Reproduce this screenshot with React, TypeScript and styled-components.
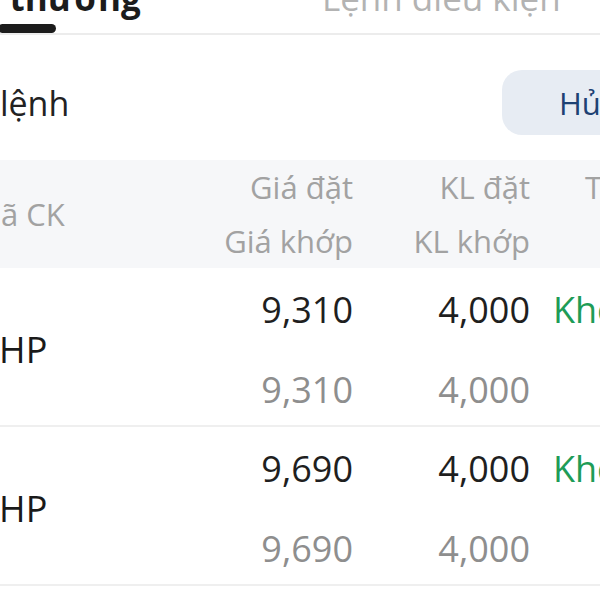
import React from 'react';
import styled, { createGlobalStyle, css } from 'styled-components';

const GlobalStyle = createGlobalStyle`
  body {
    margin: 0;
    background: #ffffff;
    font-family: "Open Sans", "Noto Sans", sans-serif;
  }
`;

type Order = {
  symbol: string;
  price: string;
  matchedPrice: string;
  volume: string;
  matchedVolume: string;
  status: string;
};

const orders: Order[] = [
  { symbol: 'DHP', price: '9,310', matchedPrice: '9,310', volume: '4,000', matchedVolume: '4,000', status: 'Khớp hết' },
  { symbol: 'DHP', price: '9,690', matchedPrice: '9,690', volume: '4,000', matchedVolume: '4,000', status: 'Khớp hết' }
];

// The screen is larger than the window, so it's cropped like the reference
const Viewport = styled.div`
  width: 600px;
  height: 600px;
  overflow: hidden;
  background: #ffffff;
`;

const Screen = styled.div`
  width: 900px;
  margin: -24px 0 0 -100px;
`;

const TabBar = styled.div`
  display: flex;
  gap: 181px;
  padding-left: 14px;
  border-bottom: 2px solid #ececec;
`;

const Tab = styled.div<{ $active?: boolean }>`
  display: flex;
  flex-direction: column;
  align-items: center;
  font-size: 35px;
  line-height: 44px;
  font-weight: ${(p) => (p.$active ? 700 : 400)};
  color: ${(p) => (p.$active ? '#1c1c1c' : '#b3b3b3')};
  white-space: nowrap;
`;

const Indicator = styled.div<{ $active?: boolean }>`
  width: 58px;
  height: 9px;
  margin-top: 4px;
  border-radius: 5px;
  background: ${(p) => (p.$active ? '#1c1c1c' : 'transparent')};
`;

const TitleRow = styled.div`
  display: flex;
  align-items: center;
  justify-content: space-between;
  padding: 35px 78px 25px 52px;
`;

const Title = styled.div`
  font-size: 34px;
  color: #222222;
`;

const CancelButton = styled.button`
  width: 220px;
  height: 65px;
  padding: 0 0 0 57px;
  border: none;
  border-radius: 20px;
  background: #e7ecf3;
  color: #1d4173;
  font-family: "Open Sans", sans-serif;
  font-size: 31px;
  text-align: left;
  white-space: nowrap;
`;

const columns = css`
  display: grid;
  grid-template-columns: 200px 180px 177px 1fr;
  padding-left: 73px;
`;

const HeaderRow = styled.div`
  ${columns};
  grid-template-rows: 54px 54px;
  background: #f6f7f9;
  font-size: 31px;
  line-height: 54px;
  color: #a2a2a2;
`;

const OrderRow = styled.div`
  ${columns};
  grid-template-rows: 50px 50px;
  row-gap: 30px;
  padding-top: 17px;
  padding-bottom: 10px;
  border-bottom: 2px solid #efefef;
  font-size: 36px;
  line-height: 50px;
`;

const SymbolCell = styled.div<{ $head?: boolean }>`
  grid-row: span 2;
  align-self: center;
  white-space: nowrap;
  color: ${(p) => (p.$head ? '#a2a2a2' : '#1a1a1a')};
`;

const NumberCell = styled.div<{ $muted?: boolean }>`
  text-align: right;
  white-space: nowrap;
  color: ${(p) => (p.$muted ? '#8e8e8e' : '#1f1f1f')};
`;

const HeadCell = styled.div`
  text-align: right;
  white-space: nowrap;
`;

const StatusCell = styled.div<{ $head?: boolean }>`
  padding-left: ${(p) => (p.$head ? '55px' : '23px')};
  white-space: nowrap;
  color: ${(p) => (p.$head ? '#a2a2a2' : '#1e9c57')};
`;

const App = (): JSX.Element => {
  return (
    <>
      <GlobalStyle />
      <Viewport>
        <Screen>
          <TabBar>
            <Tab $active>
              Lệnh thường
              <Indicator $active />
            </Tab>
            <Tab>
              Lệnh điều kiện
              <Indicator />
            </Tab>
          </TabBar>

          <TitleRow>
            <Title>Sổ lệnh</Title>
            <CancelButton type="button">Hủy tất cả</CancelButton>
          </TitleRow>

          <HeaderRow>
            <SymbolCell $head>Mã CK</SymbolCell>
            <HeadCell>Giá đặt</HeadCell>
            <HeadCell>KL đặt</HeadCell>
            <StatusCell $head>Trạng thái</StatusCell>
            <HeadCell>Giá khớp</HeadCell>
            <HeadCell>KL khớp</HeadCell>
            <StatusCell $head />
          </HeaderRow>

          {orders.map((order, i) => (
            <OrderRow key={i}>
              <SymbolCell>{order.symbol}</SymbolCell>
              <NumberCell>{order.price}</NumberCell>
              <NumberCell>{order.volume}</NumberCell>
              <StatusCell>{order.status}</StatusCell>
              <NumberCell $muted>{order.matchedPrice}</NumberCell>
              <NumberCell $muted>{order.matchedVolume}</NumberCell>
              <StatusCell />
            </OrderRow>
          ))}
        </Screen>
      </Viewport>
    </>
  );
};

export default App;
